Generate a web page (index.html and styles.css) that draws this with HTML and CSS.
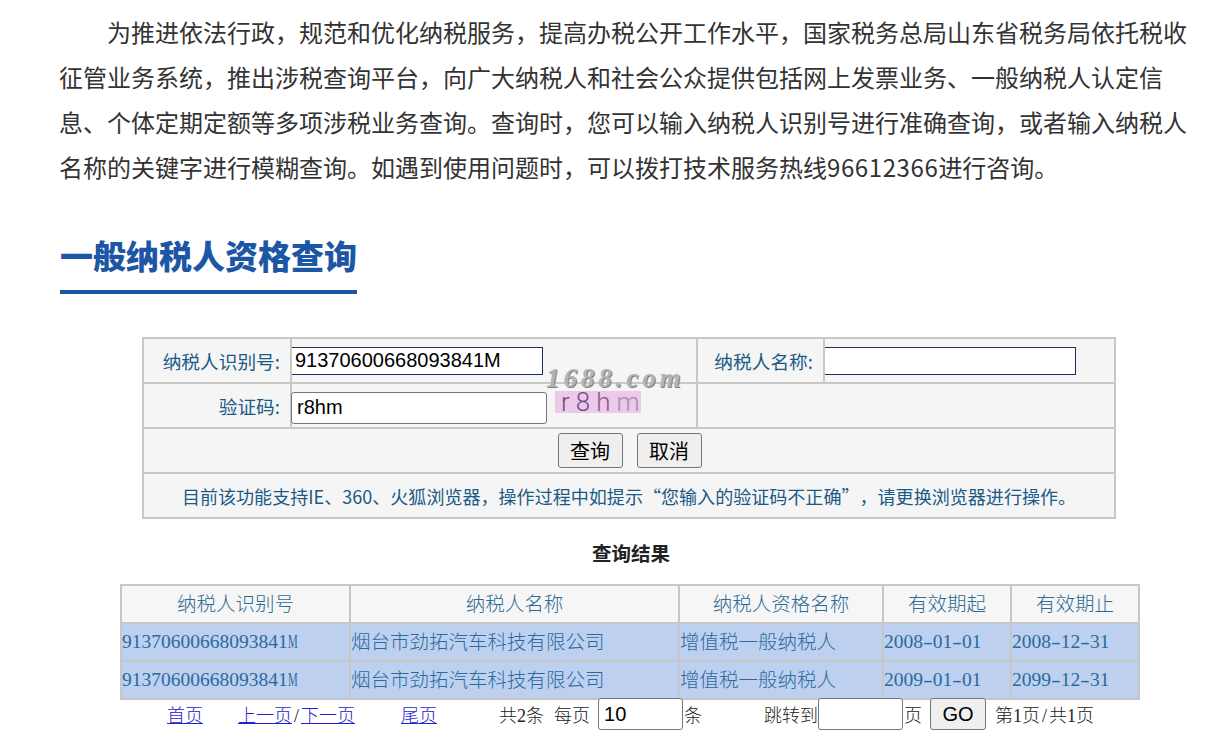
FILE: index.html
```html
<!DOCTYPE html>
<html lang="zh-CN">
<head>
<meta charset="utf-8">
<title>一般纳税人资格查询</title>
<link rel="stylesheet" href="styles.css">
</head>
<body>
<main class="page">
  <p class="intro">为推进依法行政，规范和优化纳税服务，提高办税公开工作水平，国家税务总局山东省税务局依托税收征管业务系统，推出涉税查询平台，向广大纳税人和社会公众提供包括网上发票业务、一般纳税人认定信息、个体定期定额等多项涉税业务查询。查询时，您可以输入纳税人识别号进行准确查询，或者输入纳税人名称的关键字进行模糊查询。如遇到使用问题时，可以拨打技术服务热线<span class="hotline">96612366</span>进行咨询。</p>
  <h1 class="title">一般纳税人资格查询</h1>
  <table class="query">
    <colgroup><col class="q1"><col class="q2"><col class="q3"><col class="q4"></colgroup>
    <tr>
      <td class="label">纳税人识别号:</td>
      <td class="field"><input class="box" type="text" value="91370600668093841M"></td>
      <td class="label">纳税人名称:</td>
      <td class="field"><input class="box" type="text"></td>
    </tr>
    <tr>
      <td class="label">验证码:</td>
      <td class="field captcha-cell">
        <div class="captcha-row">
          <input class="code" type="text" value="r8hm">
          <span class="captcha"><span class="c1">r</span><span class="c2">8</span><span class="c3">h</span><span class="c4">m</span></span>
        </div>
        <span class="watermark">1688.com</span>
      </td>
      <td colspan="2"></td>
    </tr>
    <tr>
      <td colspan="4">
        <div class="actions"><button class="btn" type="button">查询</button><button class="btn" type="button">取消</button></div>
      </td>
    </tr>
    <tr>
      <td colspan="4" class="notice">目前该功能支持IE、360、火狐浏览器，操作过程中如提示“您输入的验证码不正确”，请更换浏览器进行操作。</td>
    </tr>
  </table>
  <h2 class="result-title">查询结果</h2>
  <table class="result">
    <colgroup><col class="r1"><col class="r2"><col class="r3"><col class="r4"><col class="r5"></colgroup>
    <thead>
      <tr><th>纳税人识别号</th><th>纳税人名称</th><th>纳税人资格名称</th><th>有效期起</th><th>有效期止</th></tr>
    </thead>
    <tbody>
      <tr><td class="num">91370600668093841<span class="narrow">M</span></td><td>烟台市劲拓汽车科技有限公司</td><td>增值税一般纳税人</td><td class="num">2008<span class="wide">-</span>01<span class="wide">-</span>01</td><td class="num">2008<span class="wide">-</span>12<span class="wide">-</span>31</td></tr>
      <tr><td class="num">91370600668093841<span class="narrow">M</span></td><td>烟台市劲拓汽车科技有限公司</td><td>增值税一般纳税人</td><td class="num">2009<span class="wide">-</span>01<span class="wide">-</span>01</td><td class="num">2099<span class="wide">-</span>12<span class="wide">-</span>31</td></tr>
    </tbody>
  </table>
  <nav class="pager">
    <a class="first" href="#">首页</a>
    <span class="prevnext"><a href="#">上一页</a><span class="slash">/</span><a href="#">下一页</a></span>
    <a class="last" href="#">尾页</a>
    <span class="total">共2条</span>
    <span class="per">每页</span>
    <input class="pg-input" type="text" value="10">
    <span class="unit">条</span>
    <span class="jump">跳转到</span>
    <input class="pg-input" type="text">
    <span class="unit">页</span>
    <button class="go" type="button">GO</button>
    <span class="count">第1页<span class="slash">/</span>共1页</span>
  </nav>
</main>
</body>
</html>
```
FILE: styles.css
```css
html, body { margin: 0; padding: 0; background: #fff; }
body { font-family: "Noto Sans CJK SC", "Liberation Sans", sans-serif; overflow: hidden; }
.page { width: 1140px; margin-left: 60px; }
.intro {
  margin: 0 0 0 -1px;
  padding-top: 9px;
  font-size: 24px;
  line-height: 45px;
  text-indent: 2em;
  color: #333;
  width: 1130px;
}
.hotline { letter-spacing: 0.6px; }
.title {
  display: inline-block;
  margin: 42px 0 0;
  padding-bottom: 11px;
  font-size: 33px;
  line-height: 48px;
  font-weight: 900;
  color: #1c56a5;
  border-bottom: 4px solid #1c56a5;
  vertical-align: top;
}
.query {
  width: 974px;
  height: 181px;
  margin: 43px 0 0 82px;
  border-collapse: collapse;
  table-layout: fixed;
  background: #f5f5f5;
  font-size: 18.7px;
  color: #1a5a86;
}
.query td { border: 2px solid #c8c8c6; padding: 0; height: 43px; }
.q1 { width: 148px; }
.q2 { width: 406px; }
.q3 { width: 127px; }
.query .label { text-align: right; padding-right: 10px; }
.box {
  display: block;
  box-sizing: border-box;
  width: 252px;
  height: 28px;
  margin-left: -1px;
  padding: 0 3px;
  border: 1px solid #18305a;
  background: #fff;
  font: 20px "Liberation Sans", sans-serif;
  color: #000;
}
.captcha-cell { position: relative; }
.captcha-row { display: flex; align-items: center; gap: 8px; margin-left: -1px; }
.code {
  box-sizing: border-box;
  width: 256px;
  height: 32px;
  margin-top: 4px;
  padding: 0 5px;
  border: 1px solid #767676;
  border-radius: 3px;
  background: #fff;
  font: 20px "Liberation Sans", sans-serif;
  color: #000;
}
.captcha {
  box-sizing: border-box;
  width: 86px;
  height: 22px;
  margin-top: -8px;
  padding-left: 6px;
  background: #ecc8ea;
  font: 300 26px/22px Roboto, "Liberation Sans", sans-serif;
  letter-spacing: 6px;
  white-space: nowrap;
}
.c1 { color: #6e4a72; }
.c2 { color: #6f4e88; }
.c3 { color: #8a5a80; }
.c4 { color: #a98cb4; }
.watermark {
  position: absolute;
  left: 254px;
  top: -21px;
  font: italic 700 27px "Liberation Serif", serif;
  letter-spacing: 3.9px;
  color: #b4b4b4;
  text-shadow: 1px 1px 0 #808080;
  white-space: nowrap;
}
.actions { display: flex; justify-content: center; gap: 14px; margin-left: 1px; }
.btn {
  box-sizing: border-box;
  width: 65px;
  height: 35px;
  padding: 0;
  border: 1px solid #767676;
  border-radius: 3px;
  background: #efefef;
  font: 20px "Noto Sans CJK SC", sans-serif;
  color: #000;
}
.query .notice { text-align: center; font-size: 18.06px; text-spacing-trim: space-all; }
.result-title {
  margin: 22px 0 0;
  padding-left: 2px;
  text-align: center;
  font-size: 19.5px;
  line-height: 24px;
  font-weight: 700;
  color: #222;
}
.result {
  width: 1020px;
  height: 115px;
  margin: 19px 0 0 60px;
  border-collapse: collapse;
  table-layout: fixed;
  font-size: 19.5px;
  font-weight: 300;
  color: #2a6a9c;
}
.result th, .result td { border: 2px solid #c6c6c6; padding: 0 0 3px; height: 33px; }
.result th { background: #f6f6f6; font-weight: 300; color: #2c6a94; }
.result td { background: #bdd0f0; text-align: left; }
.result td.num { font-family: "Liberation Serif", serif; font-weight: 400; padding-bottom: 1px; }
.narrow, .wide { display: inline-block; width: 9.75px; transform-origin: left center; }
.narrow { transform: scaleX(0.56); }
.wide { transform: scaleX(1.5); }
.r1 { width: 229px; }
.r2 { width: 329px; }
.r3 { width: 204px; }
.r4 { width: 128px; }
.pager {
  display: flex;
  align-items: center;
  height: 32px;
  margin: -2px 0 0 107px;
  font-family: "Liberation Serif", "Noto Sans CJK SC", serif;
  font-size: 18px;
  font-weight: 300;
  color: #222;
}
.pager a { color: #2222cc; }
.slash { margin: 0 2px; }
.prevnext { margin-left: 35px; }
.last { margin-left: 46px; }
.total { margin-left: 62px; }
.per { margin-left: 10px; }
.pager .per + .pg-input { margin-left: 8px; }
.pg-input {
  box-sizing: border-box;
  width: 85px;
  height: 32px;
  padding: 0 5px;
  border: 1px solid #767676;
  border-radius: 3px;
  background: #fff;
  font: 20px "Liberation Sans", sans-serif;
  color: #000;
}
.unit { margin-left: 1px; }
.jump { margin-left: 62px; }
.go {
  box-sizing: border-box;
  width: 56px;
  height: 32px;
  margin-left: 8px;
  padding: 0;
  border: 1px solid #767676;
  border-radius: 3px;
  background: #efefef;
  font: 20px "Liberation Sans", sans-serif;
  color: #000;
}
.count { margin-left: 9px; }
```
